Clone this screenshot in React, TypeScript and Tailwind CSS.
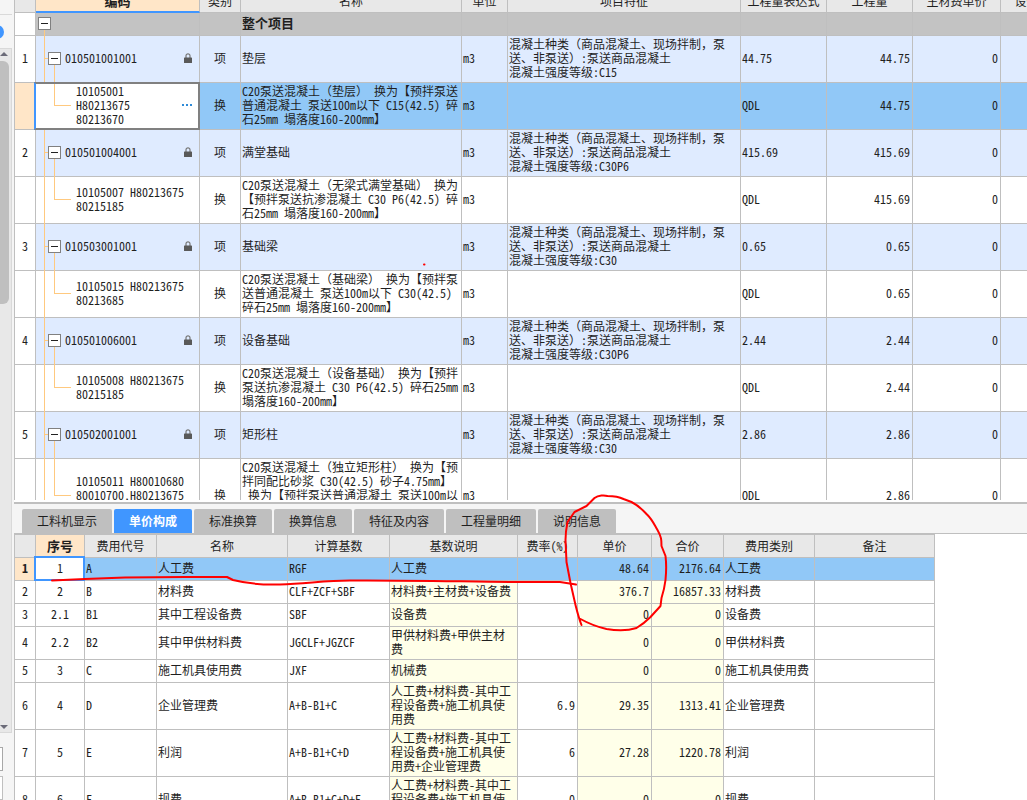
import clsx from 'clsx'

type Align = 'left' | 'center' | 'right'

type QuotaRow = {
  no?: string
  kind: '项' | '换'
  code: string
  name: string
  feature?: string
  expression: string
  quantity: string
  selected?: boolean
  tall?: boolean
}

type FeeRow = {
  index: string
  code: string
  name: string
  basis: string
  note: string
  rate?: string
  unitPrice: string
  total: string
  category: string
}

const featureText = (grade: string) =>
  `混凝土种类（商品混凝土、现场拌制，泵\n送、非泵送）:泵送商品混凝土\n混凝土强度等级:${grade}`

const quotaRows: QuotaRow[] = [
  { no: '1', kind: '项', code: '010501001001', name: '垫层', feature: featureText('C15'), expression: '44.75', quantity: '44.75' },
  { kind: '换', code: '10105001\nH80213675\n80213670', name: 'C20泵送混凝土（垫层） 换为【预拌泵送\n普通混凝土 泵送100m以下 C15(42.5) 碎\n石25mm 塌落度160-200mm】', expression: 'QDL', quantity: '44.75', selected: true },
  { no: '2', kind: '项', code: '010501004001', name: '满堂基础', feature: featureText('C30P6'), expression: '415.69', quantity: '415.69' },
  { kind: '换', code: '10105007 H80213675\n80215185', name: 'C20泵送混凝土（无梁式满堂基础） 换为\n【预拌泵送抗渗混凝土 C30 P6(42.5) 碎\n石25mm 塌落度160-200mm】', expression: 'QDL', quantity: '415.69' },
  { no: '3', kind: '项', code: '010503001001', name: '基础梁', feature: featureText('C30'), expression: '0.65', quantity: '0.65' },
  { kind: '换', code: '10105015 H80213675\n80213685', name: 'C20泵送混凝土（基础梁） 换为【预拌泵\n送普通混凝土 泵送100m以下 C30(42.5)\n碎石25mm 塌落度160-200mm】', expression: 'QDL', quantity: '0.65' },
  { no: '4', kind: '项', code: '010501006001', name: '设备基础', feature: featureText('C30P6'), expression: '2.44', quantity: '2.44' },
  { kind: '换', code: '10105008 H80213675\n80215185', name: 'C20泵送混凝土（设备基础） 换为【预拌\n泵送抗渗混凝土 C30 P6(42.5) 碎石25mm\n塌落度160-200mm】', expression: 'QDL', quantity: '2.44' },
  { no: '5', kind: '项', code: '010502001001', name: '矩形柱', feature: featureText('C30'), expression: '2.86', quantity: '2.86' },
  { kind: '换', code: '10105011 H80010680\n80010700,H80213675\n80213685', name: 'C20泵送混凝土（独立矩形柱） 换为【预\n拌同配比砂浆 C30(42.5) 砂子4.75mm】\n 换为【预拌泵送普通混凝土 泵送100m以\n下 C30(42.5) 碎石25mm\n塌落度160-200mm】', expression: 'QDL', quantity: '2.86', tall: true },
]

const tabs = ['工料机显示', '单价构成', '标准换算', '换算信息', '特征及内容', '工程量明细', '说明信息']

const feeRows: FeeRow[] = [
  { index: '1', code: 'A', name: '人工费', basis: 'RGF', note: '人工费', unitPrice: '48.64', total: '2176.64', category: '人工费' },
  { index: '2', code: 'B', name: '材料费', basis: 'CLF+ZCF+SBF', note: '材料费+主材费+设备费', unitPrice: '376.7', total: '16857.33', category: '材料费' },
  { index: '2.1', code: 'B1', name: '其中工程设备费', basis: 'SBF', note: '设备费', unitPrice: '0', total: '0', category: '设备费' },
  { index: '2.2', code: 'B2', name: '其中甲供材料费', basis: 'JGCLF+JGZCF', note: '甲供材料费+甲供主材\n费', unitPrice: '0', total: '0', category: '甲供材料费' },
  { index: '3', code: 'C', name: '施工机具使用费', basis: 'JXF', note: '机械费', unitPrice: '0', total: '0', category: '施工机具使用费' },
  { index: '4', code: 'D', name: '企业管理费', basis: 'A+B-B1+C', note: '人工费+材料费-其中工\n程设备费+施工机具使\n用费', rate: '6.9', unitPrice: '29.35', total: '1313.41', category: '企业管理费' },
  { index: '5', code: 'E', name: '利润', basis: 'A+B-B1+C+D', note: '人工费+材料费-其中工\n程设备费+施工机具使\n用费+企业管理费', rate: '6', unitPrice: '27.28', total: '1220.78', category: '利润' },
  { index: '6', code: 'F', name: '规费', basis: 'A+B-B1+C+D+E', note: '人工费+材料费-其中工\n程设备费+施工机具使\n用费+企业管理费', rate: '0', unitPrice: '0', total: '0', category: '规费' },
]

const rowHeight: Record<number, string> = {
  1: 'h-[23px]',
  2: 'h-[33px]',
  3: 'h-[47px]',
}

function Cell({ align = 'left', className, children }: { align?: Align; className?: string; children?: React.ReactNode }) {
  return (
    <td
      className={clsx(
        'overflow-hidden border-r border-b border-[#bfbfbf] p-0 pb-0.5 align-middle whitespace-pre',
        align === 'left' && 'pl-px text-left',
        align === 'center' && 'text-center',
        align === 'right' && 'pr-0.5 text-right',
        className,
      )}
    >
      {children}
    </td>
  )
}

function Toggle() {
  return (
    <button
      type="button"
      aria-label="折叠"
      className="relative flex h-[13px] w-[13px] shrink-0 items-center justify-center border border-[#808080] bg-white"
    >
      <span className="h-px w-[7px] bg-[#222]" />
    </button>
  )
}

function Lock() {
  return (
    <svg width="8" height="10" viewBox="0 0 8 10" className="shrink-0" aria-hidden="true">
      <path d="M2 5V2.8a2 2 0 0 1 4 0V5" fill="none" stroke="#777" strokeWidth="1.2" />
      <rect y="4.5" width="8" height="5.5" rx=".6" fill="#595959" />
    </svg>
  )
}

// Connector lines of the tree inside the code column
function TreeLines({ kind, trunk }: { kind: 'root' | 'parent' | 'child'; trunk: boolean }) {
  return (
    <svg className="absolute -top-px left-0 h-[calc(100%+1px)] w-9" fill="#ffc97f" shapeRendering="crispEdges" aria-hidden="true">
      {trunk && <rect x="8" y={kind === 'root' ? 12 : 0} width="1" height="100%" />}
      {kind === 'parent' && (
        <>
          <rect x="8" y="49%" width="8" height="1" />
          <rect x="18" y="50%" width="1" height="50%" />
        </>
      )}
      {kind === 'child' && (
        <>
          <rect x="18" width="1" height="49%" />
          <rect x="18" y="49%" width="17" height="1" />
        </>
      )}
    </svg>
  )
}

function QuotaCode({ row }: { row: QuotaRow }) {
  if (row.kind === '项') {
    return (
      <td className="relative border-r border-b border-[#bfbfbf] p-0 pb-0.5">
        <TreeLines kind="parent" trunk />
        <div className="flex items-center pr-[7px] pl-3">
          <Toggle />
          <span className="ml-1 flex-1">{row.code}</span>
          <Lock />
        </div>
      </td>
    )
  }
  return (
    <td className="relative border-r border-b border-[#bfbfbf] bg-white p-0 pb-0.5 whitespace-pre">
      {row.selected && (
        <span className="absolute -top-px -right-px -bottom-px -left-0.5 z-10 border-2 border-[#808080] border-l-[#4096ff]" />
      )}
      <TreeLines kind="child" trunk={!row.selected} />
      <div className="flex items-center pr-[7px] pl-10">
        <span className="flex-1">{row.code}</span>
        {row.selected && (
          <button type="button" aria-label="更多" className="relative z-10 flex gap-0.5">
            <span className="size-0.5 bg-[#2f8bd8]" />
            <span className="size-0.5 bg-[#2f8bd8]" />
            <span className="size-0.5 bg-[#2f8bd8]" />
          </button>
        )}
      </div>
    </td>
  )
}

function QuotaTable() {
  const headers = ['', '编码', '类别', '名称', '单位', '项目特征', '工程量表达式', '工程量', '主材费单价', '设备费单价']
  return (
    <table className="w-[1075px] table-fixed border-separate border-spacing-0 border-l border-[#bfbfbf]">
      <colgroup>
        <col className="w-[21px]" />
        <col className="w-[164px]" />
        <col className="w-[41px]" />
        <col className="w-[221px]" />
        <col className="w-[46px]" />
        <col className="w-[233px]" />
        <col className="w-[86px]" />
        <col className="w-[86px]" />
        <col className="w-[88px]" />
        <col className="w-[88px]" />
      </colgroup>
      <thead>
        <tr>
          {headers.map((h) => (
            <th
              key={h}
              className={clsx(
                'border-r border-[#bfbfbf] p-0 whitespace-nowrap',
                h === '编码'
                  ? 'border-b-2 border-b-[#4096ff] bg-[#ffe6c8] text-[13px] font-bold'
                  : 'border-b bg-[#e8e8e8] font-normal',
              )}
            >
              {/* the header is scrolled half out of the pane */}
              <div className={clsx('flex items-end justify-center overflow-hidden', h === '编码' ? 'h-[11px] pb-[3px]' : 'h-3 pb-1')}>
                {h}
              </div>
            </th>
          ))}
        </tr>
      </thead>
      <tbody>
        <tr className="h-[23px] bg-[#c3c3c3]">
          <Cell className="bg-white" />
          <td className="relative border-r border-b border-[#bfbfbf] p-0 pb-0.5 pl-0.5">
            <TreeLines kind="root" trunk />
            <Toggle />
          </td>
          <Cell />
          <Cell className="text-[13px] font-bold">整个项目</Cell>
          <Cell />
          <Cell />
          <Cell />
          <Cell />
          <Cell />
          <Cell />
        </tr>
        {quotaRows.map((row) => (
          <tr
            key={row.code}
            className={clsx(
              row.tall ? 'h-[75px]' : 'h-[47px]',
              row.selected ? 'bg-[#91c8f7]' : row.kind === '项' ? 'bg-[#dfebff]' : 'bg-white',
            )}
          >
            <Cell align="center" className={row.selected ? 'bg-[#ffe6c8]' : 'bg-white'}>{row.no}</Cell>
            <QuotaCode row={row} />
            <Cell align="center">{row.kind}</Cell>
            <Cell>{row.name}</Cell>
            <Cell>m3</Cell>
            <Cell>{row.feature}</Cell>
            <Cell>{row.expression}</Cell>
            <Cell align="right">{row.quantity}</Cell>
            <Cell align="right">0</Cell>
            <Cell align="right">0</Cell>
          </tr>
        ))}
      </tbody>
    </table>
  )
}

function FeeTable() {
  const headers = ['', '序号', '费用代号', '名称', '计算基数', '基数说明', '费率(%)', '单价', '合价', '费用类别', '备注']
  return (
    <table className="w-[921px] table-fixed border-separate border-spacing-0 border-t border-l border-[#bfbfbf]">
      <colgroup>
        <col className="w-[21px]" />
        <col className="w-[49px]" />
        <col className="w-[72px]" />
        <col className="w-[131px]" />
        <col className="w-[102px]" />
        <col className="w-[128px]" />
        <col className="w-[60px]" />
        <col className="w-[74px]" />
        <col className="w-[72px]" />
        <col className="w-[91px]" />
        <col className="w-[120px]" />
      </colgroup>
      <thead>
        <tr className="h-[23px]">
          {headers.map((h) => (
            <th
              key={h}
              className={clsx(
                'border-r border-b border-[#bfbfbf] p-0 whitespace-nowrap',
                h === '序号' ? 'bg-[#ffe6c8] text-[13px] font-bold' : 'bg-[#e8e8e8] font-normal',
              )}
            >
              {h}
            </th>
          ))}
        </tr>
      </thead>
      <tbody>
        {feeRows.map((row, i) => {
          const active = i === 0
          const computed = active ? '' : 'bg-[#ffffe9]'
          return (
            <tr key={row.index} className={clsx(rowHeight[row.note.split('\n').length], active ? 'bg-[#91c8f7]' : 'bg-white')}>
              <Cell align="center" className={active ? 'bg-[#ffe6c8] font-bold' : ''}>{i + 1}</Cell>
              <td className="relative border-r border-b border-[#bfbfbf] bg-white p-0 pb-0.5 text-center">
                {active && <span className="absolute -top-0.5 -right-px -bottom-px -left-0.5 z-10 border-2 border-[#4096ff]" />}
                {row.index}
              </td>
              <Cell>{row.code}</Cell>
              <Cell>{row.name}</Cell>
              <Cell>{row.basis}</Cell>
              <Cell className={computed}>{row.note}</Cell>
              <Cell align="right">{row.rate}</Cell>
              <Cell align="right" className={computed}>{row.unitPrice}</Cell>
              <Cell align="right" className={computed}>{row.total}</Cell>
              <Cell>{row.category}</Cell>
              <Cell />
            </tr>
          )
        })}
      </tbody>
    </table>
  )
}

function SideStrip() {
  return (
    <aside className="flex w-3.5 shrink-0 flex-col bg-[#f5f5f5]">
      <div className="h-[15px] w-3 border-b border-[#d9d9d9]" />
      <div className="flex h-[34px] w-3 items-center overflow-hidden border-b border-[#d9d9d9]">
        <span className="-ml-2.5 size-3.5 shrink-0 rounded-full bg-[#4096ff]" />
      </div>
      <div className="flex w-3 flex-1 flex-col justify-between border-r border-[#d9d9d9] bg-[#e8e8e8] pt-[3px] pb-[3px]">
        <div>
          <svg width="9" height="4" viewBox="0 0 9 4" aria-hidden="true"><path d="M0 4 4 0l4 4z" fill="#6b6b78" /></svg>
          <div className="mt-[5px] h-[243px] w-[9px] rounded-r-md bg-[#bfbfbf]" />
        </div>
        <svg width="9" height="4" viewBox="0 0 9 4" aria-hidden="true"><path d="M0 0h8L4 4z" fill="#6b6b78" /></svg>
      </div>
      <div className="flex h-[68px] w-3 shrink-0 flex-col gap-[5px] border-t border-[#d9d9d9] pt-3.5">
        <div className="h-6 w-[3px] border border-l-0 border-[#a8a8a8] bg-white" />
        <div className="h-6 w-[3px] border border-l-0 border-[#bfbfbf] bg-white" />
      </div>
    </aside>
  )
}

// Red pen marks drawn over both tables
function PenMarks() {
  return (
    <svg
      className="pointer-events-none absolute top-0 left-0 z-20"
      width="700"
      height="640"
      viewBox="0 0 700 640"
      fill="none"
      stroke="#f00"
      strokeWidth="2"
      strokeLinejoin="round"
      strokeLinecap="round"
      aria-hidden="true"
    >
      <path d="M52 580.5 85 579l40-1.5 60-.5h42l6 3c16 4 32 5 47 4.500 28-1 45-4 70-4 60-.5 130 1.500 170 1.500h40l16 2.500" />
      <path d="M581.500 625c-2-5-4-12-6-20l-5-22-4-21-1-22c0-8 1-13 2-18l7-10 12-6 8-8c4-3 10-3 13-2 8 0 12 1 16 3l8 3c8 4 12 9 16 13 5 5 7 10 10 15 4 7 4 10 4 16l4 10c1 8 1 14 0 24-1 8-2 12-4 18l-1 8-10 11c-6 6-9 8-14 11-9 3-19 3-30 1-9-2-17-5-26-10" />
      <path d="M424 264.500h.5" />
    </svg>
  )
}

export default function App() {
  return (
    <div className="relative flex h-screen overflow-hidden bg-white font-['Noto_Sans_Mono_CJK_SC','Noto_Sans_CJK_SC','Liberation_Mono',monospace] text-[12px] leading-[14px] text-[#1f1f1f]">
      <SideStrip />
      <main className="flex min-w-0 flex-1 flex-col">
        <section className="min-h-0 flex-1 pb-0.5">
          <div className="h-full overflow-hidden">
            <QuotaTable />
          </div>
        </section>
        <section className="flex h-[298px] shrink-0 flex-col overflow-hidden border-t-2 border-[#bfbfbf]">
          <div
            role="tablist"
            className="flex h-[30px] shrink-0 items-end gap-0.5 border-b border-[#bfbfbf] bg-[#f5f5f5] pl-2 font-['Noto_Sans_CJK_SC',sans-serif]"
          >
            {tabs.map((tab) => {
              const selected = tab === '单价构成'
              return (
                <button
                  key={tab}
                  type="button"
                  role="tab"
                  aria-selected={selected}
                  className={clsx(
                    'h-6 rounded-t-[2px] px-[15px] whitespace-nowrap',
                    selected ? 'bg-[#4096ff] font-bold text-white' : 'bg-[#bfbfbf]',
                  )}
                >
                  {tab}
                </button>
              )
            })}
          </div>
          <FeeTable />
        </section>
      </main>
      <PenMarks />
    </div>
  )
}
